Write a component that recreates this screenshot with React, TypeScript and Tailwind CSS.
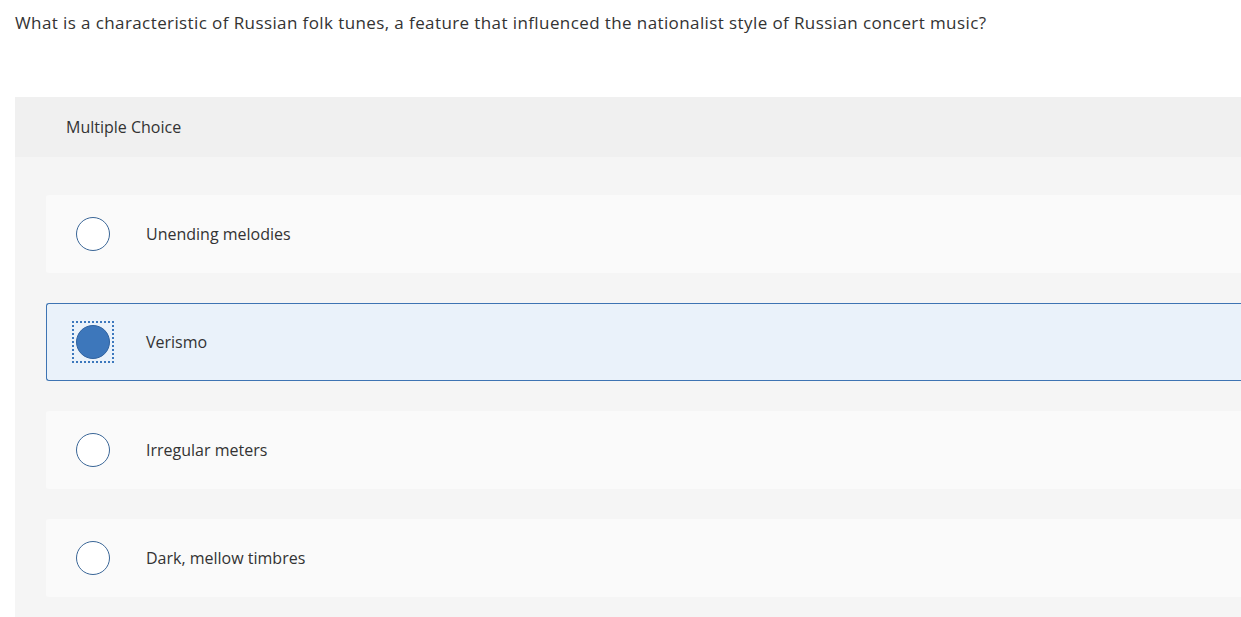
import { useState } from 'react'

const options = [
  'Unending melodies',
  'Verismo',
  'Irregular meters',
  'Dark, mellow timbres',
]

function Radio({ checked }: { checked: boolean }) {
  if (checked) {
    return (
      <div className="w-[42px] h-[42px] flex items-center justify-center outline-2 outline-dotted outline-[#3c78bd] -outline-offset-2">
        <div className="w-[34px] h-[34px] rounded-full bg-[#3d77bb] border border-[#2f62a0]" />
      </div>
    )
  }
  return (
    <div className="w-[42px] h-[42px] flex items-center justify-center">
      <div className="w-[34px] h-[34px] rounded-full bg-white border-[1.5px] border-[#3a6697]" />
    </div>
  )
}

export default function App() {
  const [selected, setSelected] = useState(1)

  return (
    <div className="bg-white min-h-[617px] overflow-hidden font-['Open_Sans','Liberation_Sans',sans-serif] text-[#333]">
      <p className="pl-[15px] pt-[11px] text-[17px] leading-[23px] tracking-[0.4px]">
        What is a characteristic of Russian folk tunes, a feature that influenced the nationalist style of Russian concert music?
      </p>
      <div className="ml-[15px] mt-[63px] bg-[#f5f5f5] pb-[30px]">
        <div className="h-[60px] bg-[#f0f0f0] flex items-center pl-[51px] text-[16px]">
          Multiple Choice
        </div>
        <div className="pt-[38px] pl-[31px] flex flex-col gap-[30px]">
          {options.map((opt, i) => {
            const isSel = i === selected
            return (
              <div
                key={opt}
                onClick={() => setSelected(i)}
                className={
                  isSel
                    ? 'h-[78px] flex items-center rounded-l-[3px] bg-[#eaf2fa] border border-r-0 border-[#3e74b3] pl-[25px] cursor-pointer'
                    : 'h-[78px] flex items-center rounded-l-[3px] bg-[#fafafa] border border-r-0 border-transparent pl-[25px] cursor-pointer'
                }
              >
                <Radio checked={isSel} />
                <span className="ml-[32px] text-[16px]">{opt}</span>
              </div>
            )
          })}
        </div>
      </div>
    </div>
  )
}
